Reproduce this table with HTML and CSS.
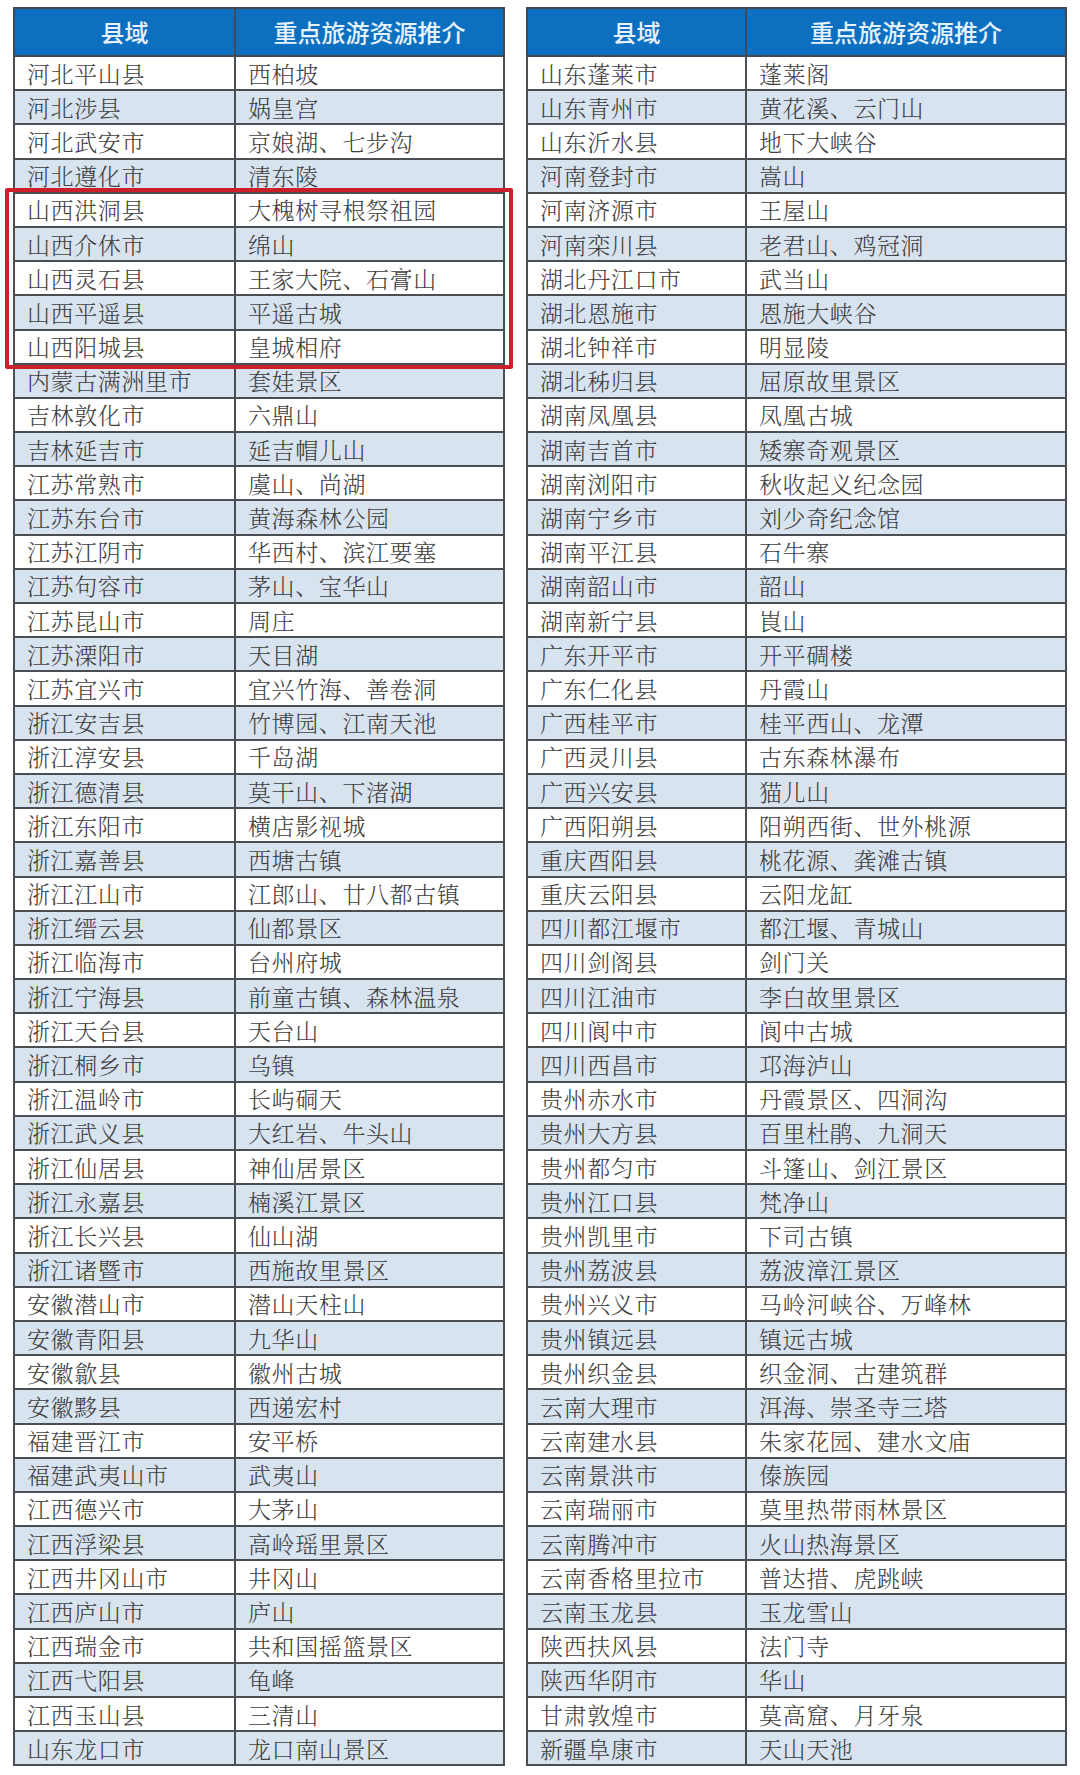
FILE: index.html
```html
<!DOCTYPE html>
<html lang="zh-CN">
<head>
<meta charset="utf-8">
<title>县域重点旅游资源推介</title>
<link rel="stylesheet" href="styles.css">
</head>
<body>
<div class="page">
  <table class="tbl tbl-left">
    <colgroup><col class="c1"><col class="c2"></colgroup>
    <thead><tr><th>县域</th><th>重点旅游资源推介</th></tr></thead>
    <tbody>
      <tr><td>河北平山县</td><td>西柏坡</td></tr>
      <tr><td>河北涉县</td><td>娲皇宫</td></tr>
      <tr><td>河北武安市</td><td>京娘湖、七步沟</td></tr>
      <tr><td>河北遵化市</td><td>清东陵</td></tr>
      <tr><td>山西洪洞县</td><td>大槐树寻根祭祖园</td></tr>
      <tr><td>山西介休市</td><td>绵山</td></tr>
      <tr><td>山西灵石县</td><td>王家大院、石膏山</td></tr>
      <tr><td>山西平遥县</td><td>平遥古城</td></tr>
      <tr><td>山西阳城县</td><td>皇城相府</td></tr>
      <tr><td>内蒙古满洲里市</td><td>套娃景区</td></tr>
      <tr><td>吉林敦化市</td><td>六鼎山</td></tr>
      <tr><td>吉林延吉市</td><td>延吉帽儿山</td></tr>
      <tr><td>江苏常熟市</td><td>虞山、尚湖</td></tr>
      <tr><td>江苏东台市</td><td>黄海森林公园</td></tr>
      <tr><td>江苏江阴市</td><td>华西村、滨江要塞</td></tr>
      <tr><td>江苏句容市</td><td>茅山、宝华山</td></tr>
      <tr><td>江苏昆山市</td><td>周庄</td></tr>
      <tr><td>江苏溧阳市</td><td>天目湖</td></tr>
      <tr><td>江苏宜兴市</td><td>宜兴竹海、善卷洞</td></tr>
      <tr><td>浙江安吉县</td><td>竹博园、江南天池</td></tr>
      <tr><td>浙江淳安县</td><td>千岛湖</td></tr>
      <tr><td>浙江德清县</td><td>莫干山、下渚湖</td></tr>
      <tr><td>浙江东阳市</td><td>横店影视城</td></tr>
      <tr><td>浙江嘉善县</td><td>西塘古镇</td></tr>
      <tr><td>浙江江山市</td><td>江郎山、廿八都古镇</td></tr>
      <tr><td>浙江缙云县</td><td>仙都景区</td></tr>
      <tr><td>浙江临海市</td><td>台州府城</td></tr>
      <tr><td>浙江宁海县</td><td>前童古镇、森林温泉</td></tr>
      <tr><td>浙江天台县</td><td>天台山</td></tr>
      <tr><td>浙江桐乡市</td><td>乌镇</td></tr>
      <tr><td>浙江温岭市</td><td>长屿硐天</td></tr>
      <tr><td>浙江武义县</td><td>大红岩、牛头山</td></tr>
      <tr><td>浙江仙居县</td><td>神仙居景区</td></tr>
      <tr><td>浙江永嘉县</td><td>楠溪江景区</td></tr>
      <tr><td>浙江长兴县</td><td>仙山湖</td></tr>
      <tr><td>浙江诸暨市</td><td>西施故里景区</td></tr>
      <tr><td>安徽潜山市</td><td>潜山天柱山</td></tr>
      <tr><td>安徽青阳县</td><td>九华山</td></tr>
      <tr><td>安徽歙县</td><td>徽州古城</td></tr>
      <tr><td>安徽黟县</td><td>西递宏村</td></tr>
      <tr><td>福建晋江市</td><td>安平桥</td></tr>
      <tr><td>福建武夷山市</td><td>武夷山</td></tr>
      <tr><td>江西德兴市</td><td>大茅山</td></tr>
      <tr><td>江西浮梁县</td><td>高岭瑶里景区</td></tr>
      <tr><td>江西井冈山市</td><td>井冈山</td></tr>
      <tr><td>江西庐山市</td><td>庐山</td></tr>
      <tr><td>江西瑞金市</td><td>共和国摇篮景区</td></tr>
      <tr><td>江西弋阳县</td><td>龟峰</td></tr>
      <tr><td>江西玉山县</td><td>三清山</td></tr>
      <tr><td>山东龙口市</td><td>龙口南山景区</td></tr>
    </tbody>
  </table>
  <table class="tbl tbl-right">
    <colgroup><col class="c1"><col class="c2"></colgroup>
    <thead><tr><th>县域</th><th>重点旅游资源推介</th></tr></thead>
    <tbody>
      <tr><td>山东蓬莱市</td><td>蓬莱阁</td></tr>
      <tr><td>山东青州市</td><td>黄花溪、云门山</td></tr>
      <tr><td>山东沂水县</td><td>地下大峡谷</td></tr>
      <tr><td>河南登封市</td><td>嵩山</td></tr>
      <tr><td>河南济源市</td><td>王屋山</td></tr>
      <tr><td>河南栾川县</td><td>老君山、鸡冠洞</td></tr>
      <tr><td>湖北丹江口市</td><td>武当山</td></tr>
      <tr><td>湖北恩施市</td><td>恩施大峡谷</td></tr>
      <tr><td>湖北钟祥市</td><td>明显陵</td></tr>
      <tr><td>湖北秭归县</td><td>屈原故里景区</td></tr>
      <tr><td>湖南凤凰县</td><td>凤凰古城</td></tr>
      <tr><td>湖南吉首市</td><td>矮寨奇观景区</td></tr>
      <tr><td>湖南浏阳市</td><td>秋收起义纪念园</td></tr>
      <tr><td>湖南宁乡市</td><td>刘少奇纪念馆</td></tr>
      <tr><td>湖南平江县</td><td>石牛寨</td></tr>
      <tr><td>湖南韶山市</td><td>韶山</td></tr>
      <tr><td>湖南新宁县</td><td>崀山</td></tr>
      <tr><td>广东开平市</td><td>开平碉楼</td></tr>
      <tr><td>广东仁化县</td><td>丹霞山</td></tr>
      <tr><td>广西桂平市</td><td>桂平西山、龙潭</td></tr>
      <tr><td>广西灵川县</td><td>古东森林瀑布</td></tr>
      <tr><td>广西兴安县</td><td>猫儿山</td></tr>
      <tr><td>广西阳朔县</td><td>阳朔西街、世外桃源</td></tr>
      <tr><td>重庆酉阳县</td><td>桃花源、龚滩古镇</td></tr>
      <tr><td>重庆云阳县</td><td>云阳龙缸</td></tr>
      <tr><td>四川都江堰市</td><td>都江堰、青城山</td></tr>
      <tr><td>四川剑阁县</td><td>剑门关</td></tr>
      <tr><td>四川江油市</td><td>李白故里景区</td></tr>
      <tr><td>四川阆中市</td><td>阆中古城</td></tr>
      <tr><td>四川西昌市</td><td>邛海泸山</td></tr>
      <tr><td>贵州赤水市</td><td>丹霞景区、四洞沟</td></tr>
      <tr><td>贵州大方县</td><td>百里杜鹃、九洞天</td></tr>
      <tr><td>贵州都匀市</td><td>斗篷山、剑江景区</td></tr>
      <tr><td>贵州江口县</td><td>梵净山</td></tr>
      <tr><td>贵州凯里市</td><td>下司古镇</td></tr>
      <tr><td>贵州荔波县</td><td>荔波漳江景区</td></tr>
      <tr><td>贵州兴义市</td><td>马岭河峡谷、万峰林</td></tr>
      <tr><td>贵州镇远县</td><td>镇远古城</td></tr>
      <tr><td>贵州织金县</td><td>织金洞、古建筑群</td></tr>
      <tr><td>云南大理市</td><td>洱海、崇圣寺三塔</td></tr>
      <tr><td>云南建水县</td><td>朱家花园、建水文庙</td></tr>
      <tr><td>云南景洪市</td><td>傣族园</td></tr>
      <tr><td>云南瑞丽市</td><td>莫里热带雨林景区</td></tr>
      <tr><td>云南腾冲市</td><td>火山热海景区</td></tr>
      <tr><td>云南香格里拉市</td><td>普达措、虎跳峡</td></tr>
      <tr><td>云南玉龙县</td><td>玉龙雪山</td></tr>
      <tr><td>陕西扶风县</td><td>法门寺</td></tr>
      <tr><td>陕西华阴市</td><td>华山</td></tr>
      <tr><td>甘肃敦煌市</td><td>莫高窟、月牙泉</td></tr>
      <tr><td>新疆阜康市</td><td>天山天池</td></tr>
    </tbody>
  </table>
  <div class="highlight"></div>
</div>
</body>
</html>
```

FILE: styles.css
```css
html, body {
  margin: 0;
  padding: 0;
  background: #ffffff;
}

.page {
  position: relative;
  display: flex;
  align-items: flex-start;
  gap: 21px;
  padding: 7px 0 0 13px;
  width: 1080px;
  height: 1775px;
  box-sizing: border-box;
}

.tbl {
  border-collapse: collapse;
  table-layout: fixed;
  font-family: "Noto Serif CJK SC", "AR PL UMing CN", "Noto Sans CJK SC", serif;
  color: #404040;
}

.tbl-left { width: 492px; }
.tbl-left .c1 { width: 221px; }
.tbl-right { width: 541px; }
.tbl-right .c1 { width: 219px; }

.tbl th {
  height: 46px;
  padding: 0;
  background: #0d6fc0;
  color: #e6f2fc;
  font-family: "Noto Sans CJK SC", sans-serif;
  font-weight: 500;
  font-size: 24px;
  text-align: center;
  border: 2px solid #3f4a55;
  line-height: 1;
}

.tbl td {
  height: 32.2px;
  padding: 0 0 0 12px;
  font-size: 23px;
  font-weight: 300;
  letter-spacing: 0.6px;
  line-height: 1;
  border: 2px solid #4a4e52;
  white-space: nowrap;
  overflow: hidden;
}

.tbl tbody tr:nth-child(odd) td { background: #ffffff; }
.tbl tbody tr:nth-child(even) td { background: #d8e3f0; }

.highlight {
  position: absolute;
  left: 5px;
  top: 188px;
  width: 508px;
  height: 181px;
  box-sizing: border-box;
  border: 4px solid #cc1f2b;
  border-radius: 2px;
  pointer-events: none;
}
```
